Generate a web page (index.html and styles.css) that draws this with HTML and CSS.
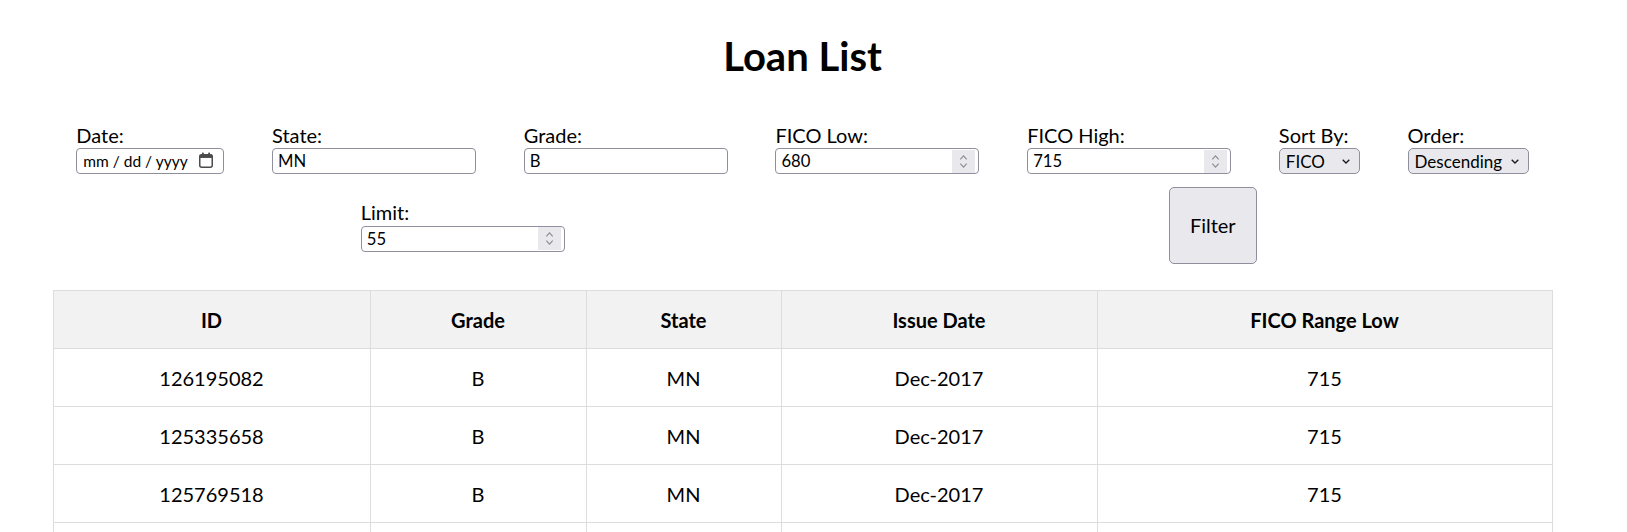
FILE: index.html
```html
<!DOCTYPE html>
<html lang="en">
<head>
<meta charset="utf-8">
<title>Loan List</title>
<link rel="stylesheet" href="styles.css">
</head>
<body>
<div class="page">
  <h1 class="title">Loan List</h1>
  <form class="filters">
    <div class="field">
      <label class="field-label" for="date">Date:</label>
      <div class="control">
        <input id="date" class="input date-input" type="text" placeholder="mm / dd / yyyy">
        <svg class="cal-icon" viewBox="0 0 16 16" width="16" height="16" aria-hidden="true">
          <rect x="4" y="0.5" width="1.8" height="3" rx="0.6" fill="#4b4b4b"/>
          <rect x="10.2" y="0.5" width="1.8" height="3" rx="0.6" fill="#4b4b4b"/>
          <rect x="1.75" y="2.75" width="12.5" height="12.5" rx="2" fill="none" stroke="#4b4b4b" stroke-width="1.5"/>
          <rect x="1.75" y="2.75" width="12.5" height="3.2" fill="#4b4b4b"/>
        </svg>
      </div>
    </div>
    <div class="field">
      <label class="field-label" for="state">State:</label>
      <div class="control">
        <input id="state" class="input" type="text" value="MN">
      </div>
    </div>
    <div class="field">
      <label class="field-label" for="grade">Grade:</label>
      <div class="control">
        <input id="grade" class="input" type="text" value="B">
      </div>
    </div>
    <div class="field">
      <label class="field-label" for="ficolow">FICO Low:</label>
      <div class="control">
        <input id="ficolow" class="input num-input" type="number" value="680">
        <span class="spin"><svg viewBox="0 0 23 23" width="23" height="23" aria-hidden="true"><path d="M8.3 9.3 L11.5 5.8 L14.7 9.3 M8.3 13.7 L11.5 17.2 L14.7 13.7" fill="none" stroke="#8c8c8c" stroke-width="1.1"/></svg></span>
      </div>
    </div>
    <div class="field">
      <label class="field-label" for="ficohigh">FICO High:</label>
      <div class="control">
        <input id="ficohigh" class="input num-input" type="number" value="715">
        <span class="spin"><svg viewBox="0 0 23 23" width="23" height="23" aria-hidden="true"><path d="M8.3 9.3 L11.5 5.8 L14.7 9.3 M8.3 13.7 L11.5 17.2 L14.7 13.7" fill="none" stroke="#8c8c8c" stroke-width="1.1"/></svg></span>
      </div>
    </div>
    <div class="field">
      <label class="field-label" for="sortby">Sort By:</label>
      <div class="control">
        <select id="sortby" class="select select-sort">
          <option>FICO</option>
          <option>Date</option>
          <option>Grade</option>
        </select>
        <svg class="chev" viewBox="0 0 8 5" width="8" height="5" aria-hidden="true"><path d="M0.7 0.7 L4 4 L7.3 0.7" fill="none" stroke="#1a1a1a" stroke-width="1.3"/></svg>
      </div>
    </div>
    <div class="field">
      <label class="field-label" for="order">Order:</label>
      <div class="control">
        <select id="order" class="select select-order">
          <option>Descending</option>
          <option>Ascending</option>
        </select>
        <svg class="chev" viewBox="0 0 8 5" width="8" height="5" aria-hidden="true"><path d="M0.7 0.7 L4 4 L7.3 0.7" fill="none" stroke="#1a1a1a" stroke-width="1.3"/></svg>
      </div>
    </div>
    <div class="field">
      <label class="field-label" for="limit">Limit:</label>
      <div class="control">
        <input id="limit" class="input num-input" type="number" value="55">
        <span class="spin"><svg viewBox="0 0 23 23" width="23" height="23" aria-hidden="true"><path d="M8.3 9.3 L11.5 5.8 L14.7 9.3 M8.3 13.7 L11.5 17.2 L14.7 13.7" fill="none" stroke="#8c8c8c" stroke-width="1.1"/></svg></span>
      </div>
    </div>
    <button class="filter-btn" type="button">Filter</button>
  </form>
  <table class="loans">
    <colgroup>
      <col class="col-id">
      <col class="col-grade">
      <col class="col-state">
      <col class="col-date">
      <col class="col-fico">
    </colgroup>
    <thead>
      <tr><th>ID</th><th>Grade</th><th>State</th><th>Issue Date</th><th>FICO Range Low</th></tr>
    </thead>
    <tbody>
      <tr><td>126195082</td><td>B</td><td>MN</td><td>Dec-2017</td><td>715</td></tr>
      <tr><td>125335658</td><td>B</td><td>MN</td><td>Dec-2017</td><td>715</td></tr>
      <tr><td>125769518</td><td>B</td><td>MN</td><td>Dec-2017</td><td>715</td></tr>
      <tr><td>125781140</td><td>B</td><td>MN</td><td>Dec-2017</td><td>710</td></tr>
      <tr><td>125412309</td><td>B</td><td>MN</td><td>Dec-2017</td><td>710</td></tr>
    </tbody>
  </table>
</div>
</body>
</html>
```

FILE: styles.css
```css
* {
  box-sizing: border-box;
}

html,
body {
  margin: 0;
  padding: 0;
  background: #ffffff;
}

body {
  font-family: Lato, "Noto Sans", sans-serif;
  font-size: 20px;
  line-height: 1.33;
  color: #000000;
  padding-right: 22px;
}

.page {
  max-width: 1500px;
  margin: 0 auto;
}

.title {
  font-size: 40px;
  font-weight: 700;
  text-align: center;
  line-height: 53px;
  margin: 30px 0 26px;
}

.filters {
  display: flex;
  flex-wrap: wrap;
  justify-content: space-around;
  margin: 0 0 25.5px;
}

.field {
  display: flex;
  flex-direction: column;
  margin: 12.5px;
}

.field-label {
  display: block;
  line-height: 26.6px;
}

.control {
  position: relative;
}

.input,
.select {
  display: block;
  margin: 0;
  height: 26px;
  font-family: inherit;
  font-size: 16.67px;
  color: #000000;
  border: 1px solid #8f8f9d;
  border-radius: 4px;
  outline: none;
}

.input {
  width: 204px;
  padding: 0 5px;
  background: #ffffff;
}

.date-input {
  width: 148px;
  padding-left: 6px;
  font-size: 15.5px;
}

.date-input::placeholder {
  color: #000000;
  opacity: 1;
}

.num-input {
  -moz-appearance: textfield;
  appearance: textfield;
}

.num-input::-webkit-inner-spin-button,
.num-input::-webkit-outer-spin-button {
  -webkit-appearance: none;
  margin: 0;
}

.cal-icon {
  position: absolute;
  right: 10px;
  top: 4px;
  pointer-events: none;
}

.spin {
  position: absolute;
  right: 4px;
  top: 1.5px;
  width: 23px;
  height: 23px;
  background: #e9e9ed;
  pointer-events: none;
}

.spin svg {
  display: block;
}

.select {
  -webkit-appearance: none;
  appearance: none;
  background: #e9e9ed;
  border-radius: 5px;
  padding: 0 22px 0 6px;
  font-size: 17px;
}

.select-sort {
  width: 81px;
}

.select-order {
  width: 121px;
}

.chev {
  position: absolute;
  right: 10px;
  top: 50%;
  margin-top: -2.5px;
  pointer-events: none;
}

.filter-btn {
  width: 88px;
  margin: 0;
  padding: 0;
  font-family: inherit;
  font-size: 20px;
  color: #000000;
  background: #e9e9ed;
  border: 1px solid #8f8f9d;
  border-radius: 5px;
}

.loans {
  width: 100%;
  border-collapse: collapse;
  table-layout: fixed;
}

.col-id {
  width: 317px;
}

.col-grade {
  width: 216px;
}

.col-state {
  width: 195px;
}

.col-date {
  width: 316px;
}

.col-fico {
  width: 455px;
}

.loans th,
.loans td {
  border: 1px solid #dddddd;
  padding: 16px 15px 14px;
  line-height: 27px;
  font-size: 20px;
  text-align: center;
}

.loans th {
  background: #f2f2f2;
  font-weight: 700;
}

.loans td {
  font-weight: 400;
}
```
